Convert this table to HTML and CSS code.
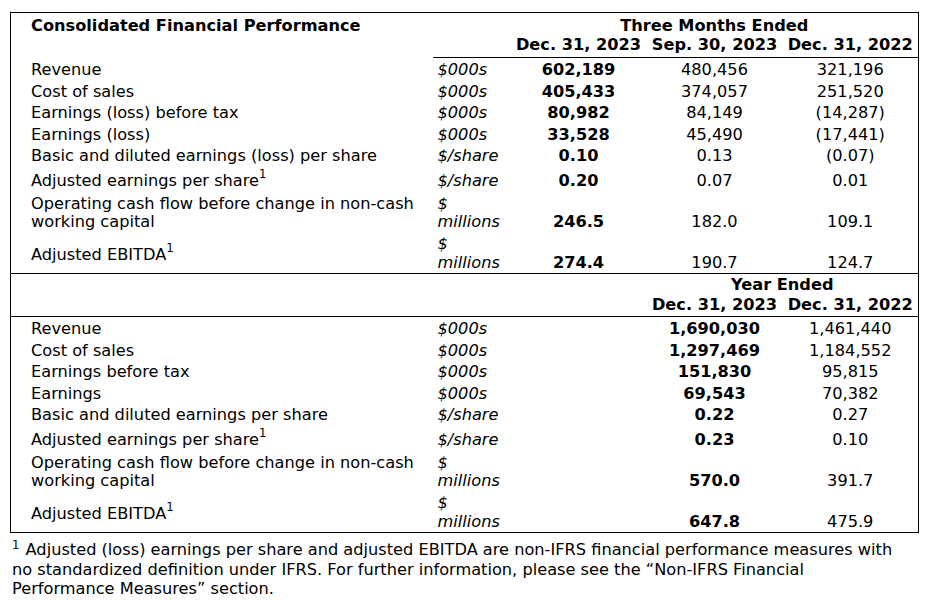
FILE: index.html
```html
<!DOCTYPE html>
<html lang="en">
<head>
<meta charset="utf-8">
<title>Consolidated Financial Performance</title>
<link rel="stylesheet" href="styles.css">
</head>
<body>
<div class="page">
<table class="fin">
  <colgroup>
    <col class="c-label"><col class="c-unit"><col class="c-val"><col class="c-val"><col class="c-val">
  </colgroup>
  <thead>
    <tr class="hd1">
      <th class="title" rowspan="2">Consolidated Financial Performance</th>
      <th></th>
      <th class="grp" colspan="3">Three Months Ended</th>
    </tr>
    <tr class="hd2">
      <th></th>
      <th class="date">Dec. 31, 2023</th>
      <th class="date">Sep. 30, 2023</th>
      <th class="date">Dec. 31, 2022</th>
    </tr>
  </thead>
  <tbody class="sec">
    <tr class="first"><td class="lbl">Revenue</td><td class="unit">$000s</td><td class="v b">602,189</td><td class="v">480,456</td><td class="v">321,196</td></tr>
    <tr><td class="lbl">Cost of sales</td><td class="unit">$000s</td><td class="v b">405,433</td><td class="v">374,057</td><td class="v">251,520</td></tr>
    <tr><td class="lbl">Earnings (loss) before tax</td><td class="unit">$000s</td><td class="v b">80,982</td><td class="v">84,149</td><td class="v">(14,287)</td></tr>
    <tr><td class="lbl">Earnings (loss)</td><td class="unit">$000s</td><td class="v b">33,528</td><td class="v">45,490</td><td class="v">(17,441)</td></tr>
    <tr><td class="lbl">Basic and diluted earnings (loss) per share</td><td class="unit">$/share</td><td class="v b">0.10</td><td class="v">0.13</td><td class="v">(0.07)</td></tr>
    <tr class="suprow"><td class="lbl">Adjusted earnings per share<sup>1</sup></td><td class="unit">$/share</td><td class="v b">0.20</td><td class="v">0.07</td><td class="v">0.01</td></tr>
    <tr><td class="lbl">Operating cash flow before change in non-cash working capital</td><td class="unit">$ millions</td><td class="v b">246.5</td><td class="v">182.0</td><td class="v">109.1</td></tr>
    <tr class="last"><td class="lbl">Adjusted EBITDA<sup>1</sup></td><td class="unit">$ millions</td><td class="v b">274.4</td><td class="v">190.7</td><td class="v">124.7</td></tr>
  </tbody>
  <tbody class="subhead">
    <tr class="hd1">
      <th></th><th></th><th></th>
      <th class="grp" colspan="2">Year Ended</th>
    </tr>
    <tr class="hd2">
      <th></th><th></th><th></th>
      <th class="date">Dec. 31, 2023</th>
      <th class="date">Dec. 31, 2022</th>
    </tr>
  </tbody>
  <tbody class="sec">
    <tr class="first"><td class="lbl">Revenue</td><td class="unit">$000s</td><td></td><td class="v b">1,690,030</td><td class="v">1,461,440</td></tr>
    <tr><td class="lbl">Cost of sales</td><td class="unit">$000s</td><td></td><td class="v b">1,297,469</td><td class="v">1,184,552</td></tr>
    <tr><td class="lbl">Earnings before tax</td><td class="unit">$000s</td><td></td><td class="v b">151,830</td><td class="v">95,815</td></tr>
    <tr><td class="lbl">Earnings</td><td class="unit">$000s</td><td></td><td class="v b">69,543</td><td class="v">70,382</td></tr>
    <tr><td class="lbl">Basic and diluted earnings per share</td><td class="unit">$/share</td><td></td><td class="v b">0.22</td><td class="v">0.27</td></tr>
    <tr class="suprow"><td class="lbl">Adjusted earnings per share<sup>1</sup></td><td class="unit">$/share</td><td></td><td class="v b">0.23</td><td class="v">0.10</td></tr>
    <tr><td class="lbl">Operating cash flow before change in non-cash working capital</td><td class="unit">$ millions</td><td></td><td class="v b">570.0</td><td class="v">391.7</td></tr>
    <tr class="last"><td class="lbl">Adjusted EBITDA<sup>1</sup></td><td class="unit">$ millions</td><td></td><td class="v b">647.8</td><td class="v">475.9</td></tr>
  </tbody>
</table>
<p class="note"><sup>1</sup> Adjusted (loss) earnings per share and adjusted EBITDA are non-IFRS financial performance measures with no standardized definition under IFRS. For further information, please see the “Non-IFRS Financial Performance Measures” section.</p>
</div>
</body>
</html>
```

FILE: styles.css
```css
html, body {
  margin: 0;
  padding: 0;
  background: #ffffff;
}

body {
  font-family: "DejaVu Sans", Verdana, sans-serif;
  font-size: 16.2px;
  color: #000000;
}

.page {
  padding: 12px 0 0 10px;
  width: 909px;
}

.fin {
  width: 909px;
  border-collapse: collapse;
  table-layout: fixed;
  border: 1px solid #000;
}

.c-label { width: 422px; }
.c-unit { width: 78px; }
.c-val { width: 136px; }

.fin th,
.fin td {
  padding: 0;
  line-height: 18px;
  font-weight: normal;
}

.fin th {
  font-weight: bold;
  text-align: center;
  vertical-align: bottom;
}

.fin .hd1 th { padding-top: 4px; line-height: 18px; }
.fin .hd2 th { padding-bottom: 2px; line-height: 20px; }

.fin .subhead .hd1 th { padding-top: 2px; }
.fin .subhead .hd2 th { padding-bottom: 1px; line-height: 21px; }

.fin th.title {
  text-align: left;
  vertical-align: top;
  padding-left: 20px;
}

.fin th.date { white-space: nowrap; }

.subhead tr.hd1 th { border-top: 1px solid #000; }
.subhead tr.hd2 th { border-bottom: 1px solid #000; }
thead tr.hd2 th { border-bottom: 1px solid #000; }

.fin td {
  padding-top: 2px;
  padding-bottom: 1.5px;
}

.fin tr.first td { padding-top: 3px; }
.fin tr.suprow td { padding-bottom: 3.5px; }

.fin td.lbl {
  padding-left: 20px;
  padding-right: 6px;
  vertical-align: middle;
}

.fin td.unit {
  font-style: italic;
  padding-left: 5px;
  padding-right: 6px;
  vertical-align: bottom;
}

.fin tr.last td.unit { line-height: 19px; padding-top: 1.5px; }
.fin tr.last td { padding-bottom: 1px; }

.fin td.v {
  text-align: center;
  vertical-align: bottom;
}

.fin td.b { font-weight: bold; }

.fin sup {
  font-size: 0.72em;
  line-height: 1;
  vertical-align: 8px;
}

.note {
  margin: 7px 0 0 2px;
  width: 895px;
  line-height: 19.5px;
}

.note sup {
  font-size: 0.72em;
  line-height: 1;
  vertical-align: 6px;
  margin-right: 1px;
}
```
